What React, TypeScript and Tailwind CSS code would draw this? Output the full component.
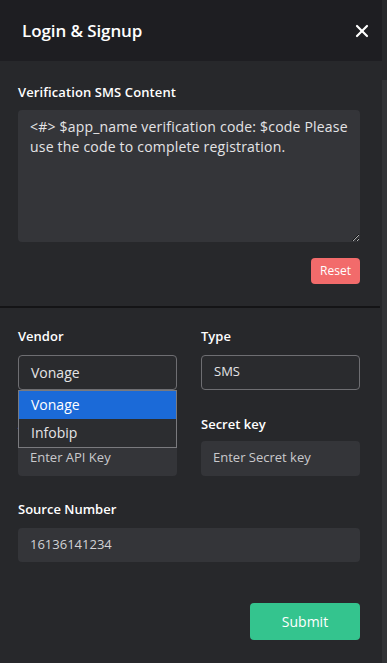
import { X } from "lucide-react";

const font = { fontFamily: '"Open Sans", "Noto Sans", sans-serif' };

const App = () => {
  return (
    <div className="flex h-[663px] w-[387px] overflow-hidden bg-[#27282b] text-white" style={font}>
      <div className="flex w-[382px] flex-col">
        <div className="flex h-[61px] items-center justify-between bg-[#1e1e22] pl-[22px] pr-[10px]">
          <h1 className="text-[17px] font-semibold tracking-[-0.1px]">Login &amp; Signup</h1>
          <X className="h-[20px] w-[20px]" strokeWidth={2.6} />
        </div>

        <div className="pl-[18px] pr-[22px] pt-[22px]">
          <label className="block text-[13px] font-semibold tracking-[0.1px]">Verification SMS Content</label>
          <textarea
            className="mt-[7px] block h-[132px] w-full rounded-[4px] bg-[#343539] px-[12px] py-[7px] text-[14px] leading-[20px] tracking-[0.2px] text-[#e4e4e6] outline-none"
            defaultValue="<#> $app_name verification code: $code Please use the code to complete registration."
          />
          <div className="mt-[16px] flex justify-end">
            <button className="h-[26px] rounded-[4px] bg-[#f26b6b] px-[9px] text-[12px] font-medium">Reset</button>
          </div>
        </div>

        <div className="mt-[22px] h-[2px] w-[380px] bg-[#141416]" />

        <div className="pl-[18px] pr-[22px] pt-[18px]">
          <div className="grid grid-cols-2 gap-x-[24px]">
            <div className="relative">
              <label className="block text-[13px] font-semibold leading-[20px]">Vendor</label>
              <div className="mt-[9px] flex h-[35px] items-center rounded-[4px] border border-[#6e6e72] bg-[#2a2b2e] px-[12px] text-[14px] text-[#e4e4e6]">
                Vonage
              </div>
              <div className="absolute left-0 right-0 top-[64px] z-10 border border-[#7a7a7e] bg-[#2c2d30] text-[14px]">
                <div className="flex h-[28px] items-center bg-[#1b6ad8] px-[12px]">Vonage</div>
                <div className="flex h-[28px] items-center px-[12px] text-[#e4e4e6]">Infobip</div>
              </div>
            </div>
            <div>
              <label className="block text-[13px] font-semibold leading-[20px]">Type</label>
              <div className="mt-[9px] flex h-[35px] items-center rounded-[4px] border border-[#6e6e72] bg-[#2a2b2e] px-[12px] text-[13px] text-[#e4e4e6]">
                SMS
              </div>
            </div>

            <div className="mt-[24px]">
              <label className="block text-[13px] font-semibold leading-[20px]">API Key</label>
              <div className="mt-[7px] flex h-[35px] items-center rounded-[4px] bg-[#343539] px-[12px] text-[13px] text-[#c9c9cc]">
                Enter API Key
              </div>
            </div>
            <div className="mt-[24px]">
              <label className="block text-[13px] font-semibold leading-[20px]">Secret key</label>
              <div className="mt-[7px] flex h-[35px] items-center rounded-[4px] bg-[#343539] px-[12px] text-[13px] text-[#c9c9cc]">
                Enter Secret key
              </div>
            </div>
          </div>

          <div className="mt-[23px]">
            <label className="block text-[13px] font-semibold leading-[20px]">Source Number</label>
            <div className="mt-[9px] flex h-[34px] items-center rounded-[4px] bg-[#343539] px-[12px] text-[13px] text-[#d2d2d5]">
              16136141234
            </div>
          </div>

          <div className="mt-[41px] flex justify-end">
            <button className="h-[37px] w-[110px] rounded-[4px] bg-[#34c48e] text-[14px] font-medium">Submit</button>
          </div>
        </div>
      </div>
      <div className="mt-[80px] w-[5px] bg-[#323336]" />
    </div>
  );
};

export default App;
